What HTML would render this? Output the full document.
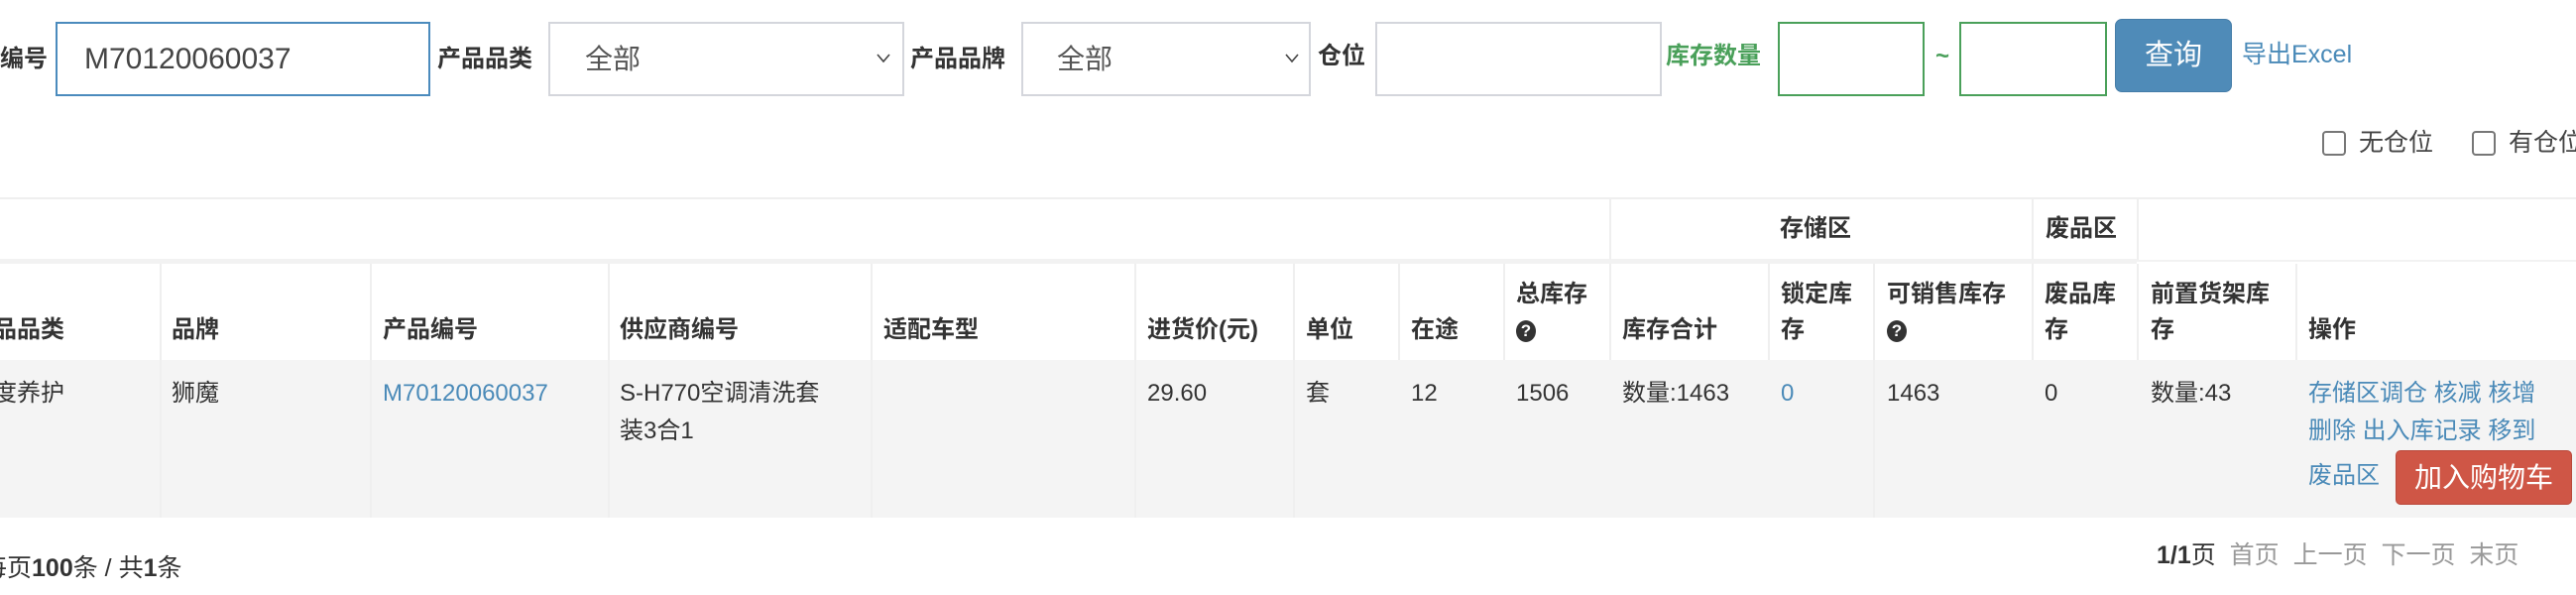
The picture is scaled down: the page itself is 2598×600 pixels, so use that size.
<!DOCTYPE html>
<html><head><meta charset="utf-8">
<style>
*{margin:0;padding:0;box-sizing:border-box}
body{width:2598px;height:600px;overflow:hidden;background:#fff;position:relative;font-family:"Liberation Sans","Noto Sans CJK SC",sans-serif;color:#333}
.a{position:absolute;white-space:nowrap}
.lbl{font-size:24px;font-weight:bold;color:#333;line-height:30px}
.box{position:absolute;border:2px solid #d4d6dc;background:#fff}
.h{font-size:24px;font-weight:bold;line-height:36px}
.d{font-size:24px;line-height:38px}
.lk{color:#4a8ab8}
.vl{position:absolute;width:2px;background:#efefef}
.q{display:inline-block;width:20px;height:22px;border-radius:50%;background:#333;color:#fff;font-size:17px;line-height:22px;text-align:center;vertical-align:middle;font-weight:bold}
</style></head><body>
<!-- search row -->
<div class="a lbl" style="left:0;top:45px">编号</div>
<div class="box" style="left:56px;top:22px;width:378px;height:75px;border-color:#4b8bbd"></div>
<div class="a" style="left:85px;top:42px;font-size:30px;line-height:36px;color:#444">M70120060037</div>
<div class="a lbl" style="left:441px;top:45px">产品品类</div>
<div class="box" style="left:553px;top:22px;width:359px;height:75px"></div>
<div class="a" style="left:590px;top:42px;font-size:28px;line-height:36px;color:#555">全部</div>
<svg class="a" style="left:884px;top:54px" width="14" height="10"><path d="M1 1 L7 8 L13 1" fill="none" stroke="#444" stroke-width="1.6"/></svg>
<div class="a lbl" style="left:918px;top:45px">产品品牌</div>
<div class="box" style="left:1030px;top:22px;width:292px;height:75px"></div>
<div class="a" style="left:1066px;top:42px;font-size:28px;line-height:36px;color:#555">全部</div>
<svg class="a" style="left:1296px;top:54px" width="14" height="10"><path d="M1 1 L7 8 L13 1" fill="none" stroke="#444" stroke-width="1.6"/></svg>
<div class="a lbl" style="left:1329px;top:42px">仓位</div>
<div class="box" style="left:1387px;top:22px;width:289px;height:75px"></div>
<div class="a lbl" style="left:1680px;top:42px;color:#4aa05a">库存数量</div>
<div class="box" style="left:1793px;top:22px;width:148px;height:75px;border-color:#4aa05a"></div>
<div class="a lbl" style="left:1952px;top:42px;color:#4aa05a">~</div>
<div class="box" style="left:1976px;top:22px;width:149px;height:75px;border-color:#4aa05a"></div>
<div class="a" style="left:2133px;top:19px;width:118px;height:74px;background:#4f8bb8;border:1px solid #457da8;border-radius:7px;color:#fff;font-size:29px;line-height:72px;text-align:center">查询</div>
<div class="a lk" style="left:2261px;top:40px;font-size:25px;line-height:30px">导出Excel</div>
<div class="a" style="left:2342px;top:132px;width:24px;height:25px;border:2px solid #777;border-radius:4px"></div>
<div class="a" style="left:2379px;top:128px;font-size:25px;line-height:32px;color:#444">无仓位</div>
<div class="a" style="left:2493px;top:132px;width:24px;height:25px;border:2px solid #777;border-radius:4px"></div>
<div class="a" style="left:2530px;top:128px;font-size:25px;line-height:32px;color:#444">有仓位</div>

<!-- table -->
<div class="a" style="left:0;top:199px;width:2598px;height:2px;background:#efefef"></div>
<div class="a" style="left:0;top:261px;width:2155px;height:5px;background:#f2f2f2"></div>
<div class="a" style="left:2155px;top:262px;width:443px;height:2px;background:#f2f2f2"></div>
<div class="vl" style="left:1623px;top:200px;height:62px"></div>
<div class="vl" style="left:2049px;top:200px;height:62px"></div>
<div class="vl" style="left:2155px;top:200px;height:62px"></div>
<div class="a h" style="left:1795px;top:213px">存储区</div>
<div class="a h" style="left:2063px;top:213px">废品区</div>

<div class="a" style="left:0;top:363px;width:2598px;height:159px;background:#f4f4f4"></div>
<div class="vl" style="left:161px;top:266px;height:256px"></div>
<div class="vl" style="left:373px;top:266px;height:256px"></div>
<div class="vl" style="left:613px;top:266px;height:256px"></div>
<div class="vl" style="left:878px;top:266px;height:256px"></div>
<div class="vl" style="left:1144px;top:266px;height:256px"></div>
<div class="vl" style="left:1304px;top:266px;height:256px"></div>
<div class="vl" style="left:1410px;top:266px;height:97px"></div>
<div class="vl" style="left:1516px;top:266px;height:97px"></div>
<div class="vl" style="left:1623px;top:266px;height:97px"></div>
<div class="vl" style="left:1783px;top:266px;height:97px"></div>
<div class="vl" style="left:1889px;top:266px;height:256px"></div>
<div class="vl" style="left:2049px;top:266px;height:97px"></div>
<div class="vl" style="left:2155px;top:266px;height:97px"></div>
<div class="vl" style="left:2315px;top:266px;height:97px"></div>

<div class="a h" style="left:-31px;top:315px">产品品类</div>
<div class="a h" style="left:173px;top:315px">品牌</div>
<div class="a h" style="left:386px;top:315px">产品编号</div>
<div class="a h" style="left:625px;top:315px">供应商编号</div>
<div class="a h" style="left:891px;top:315px">适配车型</div>
<div class="a h" style="left:1157px;top:315px">进货价(元)</div>
<div class="a h" style="left:1317px;top:315px">单位</div>
<div class="a h" style="left:1423px;top:315px">在途</div>
<div class="a h" style="left:1529px;top:279px">总库存<br><span class="q">?</span></div>
<div class="a h" style="left:1636px;top:315px">库存合计</div>
<div class="a h" style="left:1796px;top:279px">锁定库<br>存</div>
<div class="a h" style="left:1903px;top:279px">可销售库存<br><span class="q">?</span></div>
<div class="a h" style="left:2062px;top:279px">废品库<br>存</div>
<div class="a h" style="left:2169px;top:279px">前置货架库<br>存</div>
<div class="a h" style="left:2328px;top:315px">操作</div>

<div class="a d" style="left:-31px;top:378px">年度养护</div>
<div class="a d" style="left:173px;top:378px">狮魔</div>
<div class="a d lk" style="left:386px;top:378px">M70120060037</div>
<div class="a d" style="left:625px;top:378px">S-H770空调清洗套<br>装3合1</div>
<div class="a d" style="left:1157px;top:378px">29.60</div>
<div class="a d" style="left:1317px;top:378px">套</div>
<div class="a d" style="left:1423px;top:378px">12</div>
<div class="a d" style="left:1529px;top:378px">1506</div>
<div class="a d" style="left:1636px;top:378px">数量:1463</div>
<div class="a d lk" style="left:1796px;top:378px">0</div>
<div class="a d" style="left:1903px;top:378px">1463</div>
<div class="a d" style="left:2062px;top:378px">0</div>
<div class="a d" style="left:2169px;top:378px">数量:43</div>
<div class="a d lk" style="left:2328px;top:378px">存储区调仓 核减 核增<br>删除 出入库记录 移到</div>
<div class="a d lk" style="left:2328px;top:461px">废品区</div>
<div class="a" style="left:2416px;top:454px;width:178px;height:55px;background:#cf5646;border:1px solid #b9483a;border-radius:5px;color:#fff;font-size:28px;line-height:53px;text-align:center">加入购物车</div>

<!-- footer -->
<div class="a" style="left:-18px;top:558px;font-size:25px;line-height:30px;color:#333">每页<b>100</b>条 / 共<b>1</b>条</div>
<div class="a" style="left:2175px;top:545px;font-size:25px;line-height:30px;color:#999"><b style="color:#333">1/1</b><span style="color:#333">页</span>&nbsp; 首页 &nbsp;上一页 &nbsp;下一页 &nbsp;末页</div>
</body></html>
